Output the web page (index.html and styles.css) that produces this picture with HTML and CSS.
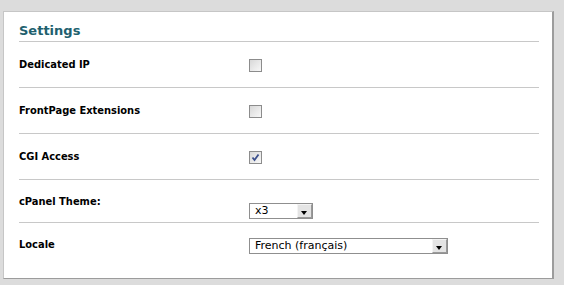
FILE: index.html
```html
<!DOCTYPE html>
<html lang="en">
<head>
    <meta charset="UTF-8">
    <title>Settings</title>
    <link rel="stylesheet" href="styles.css">
</head>
<body>
    <!-- Settings panel -->
    <div class="panel">
        <h2 class="panel-title">Settings</h2>

        <div class="row">
            <div class="label">Dedicated IP</div>
            <div class="field"><span class="check"></span></div>
        </div>

        <div class="row">
            <div class="label">FrontPage Extensions</div>
            <div class="field"><span class="check"></span></div>
        </div>

        <div class="row">
            <div class="label">CGI Access</div>
            <div class="field">
                <span class="check checked">
                    <svg width="9" height="9" viewBox="0 0 9 9"><path d="M1.5 4.5 L3.5 7 L7.5 1.5" fill="none" stroke="#3b4f8c" stroke-width="1.8"/></svg>
                </span>
            </div>
        </div>

        <div class="row row-top theme">
            <div class="label">cPanel Theme:</div>
            <div class="field">
                <div class="select select-small">
                    <span class="select-text">x3</span>
                    <span class="select-btn"></span>
                </div>
            </div>
        </div>

        <div class="row row-top last">
            <div class="label">Locale</div>
            <div class="field">
                <div class="select select-wide">
                    <span class="select-text">French (français)</span>
                    <span class="select-btn"></span>
                </div>
            </div>
        </div>
    </div>
</body>
</html>
```

FILE: styles.css
```css
body {
    margin: 0;
    background: #dcdcdc;
    font-family: "DejaVu Sans", Verdana, sans-serif;
    font-size: 11px;
    color: #000;
}

/* Outer white box */
.panel {
    box-sizing: border-box;
    width: 551px;
    height: 268px;
    margin: 11px 0 0 3px;
    padding: 0 13px 0 15px;
    background: #fff;
    border: 1px solid;
    border-color: #c6c6c6 #9c9c9c #9c9c9c #c6c6c6;
    border-right-width: 2px;
}

.panel-title {
    margin: 0;
    padding: 11px 0 2px;
    font-size: 13px;
    line-height: 16px;
    color: #215f6e;
    border-bottom: 1px solid #c8c8c8;
}

/* Form rows */
.row {
    display: flex;
    align-items: center;
    height: 45px;
    border-bottom: 1px solid #c8c8c8;
}
.row-top { align-items: flex-start; }
.row.theme { height: 42px; }
.row.last { border-bottom: none; height: auto; padding-top: 15px; }

.label {
    width: 230px;
    font-family: "DejaVu Sans Condensed", "DejaVu Sans", sans-serif;
    font-weight: bold;
    line-height: 13px;
}
.theme .label { padding-top: 15px; }
.theme .field { padding-top: 23px; }

.field { display: flex; }

/* Checkbox */
.check {
    box-sizing: border-box;
    width: 13px;
    height: 13px;
    margin-top: 2px;
    border: 1px solid #8c8c8c;
    background: linear-gradient(135deg, #d8d8d8, #f8f8f8);
    display: flex;
    align-items: center;
    justify-content: center;
}

/* Dropdowns */
.select {
    box-sizing: border-box;
    height: 16px;
    display: flex;
    border: 1px solid #8f8f8f;
    background: #fff;
}
.select-small { width: 64px; }
.select-wide { width: 199px; }

.select-text {
    flex: 1;
    padding-left: 5px;
    line-height: 14px;
}

.select-btn {
    box-sizing: border-box;
    width: 15px;
    height: 14px;
    background: #e4e4e4;
    border: 1px solid #9a9a9a;
    border-top-color: #f4f4f4;
    border-left-color: #f4f4f4;
    position: relative;
}
.select-btn::after {
    content: "";
    position: absolute;
    left: 3px;
    top: 6px;
    border-left: 3px solid transparent;
    border-right: 3px solid transparent;
    border-top: 4px solid #000;
}
```
